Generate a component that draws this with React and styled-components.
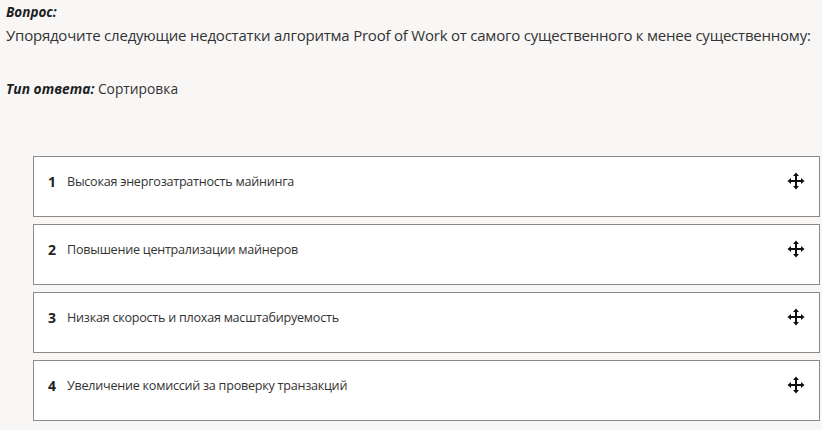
import React from "react"
import styled, { createGlobalStyle } from "styled-components"

const Global = createGlobalStyle`
  html, body {
    margin: 0;
    padding: 0;
    background: #f8f7f6;
  }
  body {
    font-family: 'Open Sans', 'Noto Sans', sans-serif;
    color: #333333;
  }
`

const Page = styled.div`
  width: 822px;
  height: 430px;
  overflow: hidden;
  padding: 3px 0 0 6px;
  box-sizing: border-box;
`

const Label = styled.div`
  font-weight: 700;
  font-style: italic;
  font-size: 13.5px;
  line-height: 18px;
  color: #1f1f1f;
`

const Question = styled.div`
  font-size: 15px;
  line-height: 22px;
  color: #333;
  letter-spacing: -0.22px;
  white-space: nowrap;
  margin-top: 3px;
`

const AnswerType = styled.div`
  font-size: 13.8px;
  line-height: 18px;
  margin-top: 34px;
  color: #333;
  b {
    font-weight: 700;
    font-style: italic;
    color: #1f1f1f;
  }
`

const List = styled.div`
  display: flex;
  flex-direction: column;
  gap: 7px;
  margin: 58px 0 0 27px;
  width: 787px;
`

const Item = styled.div`
  display: flex;
  align-items: flex-start;
  height: 61px;
  box-sizing: border-box;
  background: #ffffff;
  border: 1px solid #8a8a8a;
  padding: 16px 14px 0 14px;
`

const Num = styled.span`
  font-weight: 700;
  font-size: 14px;
  line-height: 18px;
  color: #222;
  width: 19px;
`

const Text = styled.span`
  flex: 1;
  font-size: 12.6px;
  line-height: 18px;
  letter-spacing: -0.25px;
  color: #333;
`

const Handle = styled.svg`
  width: 18px;
  height: 18px;
  margin-top: -1px;
`

const MoveIcon = () => (
  <Handle viewBox="0 0 18 18">
    <path d="M9 3v12M3 9h12" stroke="#111" strokeWidth="2" />
    <path d="M9 0.5L6 4h6zM9 17.5L6 14h6zM0.5 9L4 6v6zM17.5 9L14 6v6z" fill="#111" />
  </Handle>
)

const items = [
  "Высокая энергозатратность майнинга",
  "Повышение централизации майнеров",
  "Низкая скорость и плохая масштабируемость",
  "Увеличение комиссий за проверку транзакций",
]

export default function App() {
  return (
    <>
      <Global />
      <Page>
        <Label>Вопрос:</Label>
        <Question>
          Упорядочите следующие недостатки алгоритма Proof of Work от самого существенного к менее существенному:
        </Question>
        <AnswerType>
          <b>Тип ответа:</b> Сортировка
        </AnswerType>
        <List>
          {items.map((t, i) => (
            <Item key={i}>
              <Num>{i + 1}</Num>
              <Text>{t}</Text>
              <MoveIcon />
            </Item>
          ))}
        </List>
      </Page>
    </>
  )
}
